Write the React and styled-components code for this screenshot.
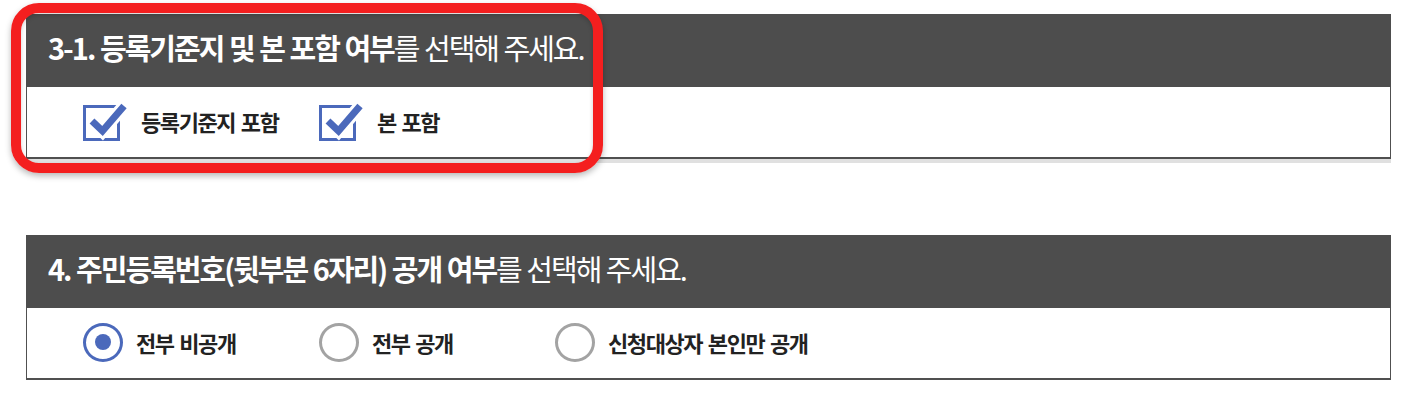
import React, { useState } from "react";
import styled, { createGlobalStyle } from "styled-components";

const GlobalStyle = createGlobalStyle`
  html, body {
    margin: 0;
    padding: 0;
    background: #ffffff;
  }
  body {
    font-family: "Noto Sans CJK KR", "Noto Sans", sans-serif;
  }
`;

const Page = styled.div`
  position: relative;
  display: flex;
  flex-direction: column;
  gap: 76px;
  padding: 14px 0 0 26px;
  width: 1365px;
`;

const Panel = styled.section`
  display: flex;
  flex-direction: column;
  width: 1365px;
  box-shadow: 1px 5px 0 -1px #e0e0e0;
`;

const Header = styled.h2`
  margin: 0;
  height: 73px;
  display: flex;
  align-items: center;
  padding: 0 0 8px 22px;
  box-sizing: border-box;
  background: #4d4d4d;
  color: #ffffff;
  font-size: 29px;
  font-weight: 400;
  letter-spacing: -2px;
  word-spacing: 1px;
  white-space: pre;

  strong {
    font-weight: 700;
  }
`;

const Body = styled.div`
  height: 72px;
  box-sizing: border-box;
  display: flex;
  align-items: center;
  padding: 0 0 2px 56px;
  border: 1.5px solid #505050;
  border-top: none;
  border-bottom-width: 2px;
  background: #ffffff;
`;

const Option = styled.label`
  display: flex;
  align-items: center;
  gap: ${(p) => (p.kind === "radio" ? "13px" : "14px")};
  min-width: 236px;
  cursor: pointer;
`;

const Label = styled.span`
  font-size: 22px;
  font-weight: 700;
  color: #222222;
  letter-spacing: -1.4px;
  word-spacing: 2px;
  white-space: pre;
`;

const RadioRing = styled.span`
  width: 40px;
  height: 39px;
  box-sizing: border-box;
  border-radius: 50%;
  border: 3px solid ${(p) => (p.checked ? "#4b69bb" : "#a3a3a3")};
  display: flex;
  align-items: center;
  justify-content: center;

  &::after {
    content: "";
    width: 16px;
    height: 16px;
    border-radius: 50%;
    background: #4b69bb;
    display: ${(p) => (p.checked ? "block" : "none")};
  }
`;

const Highlight = styled.div`
  position: absolute;
  left: 11px;
  top: 3px;
  width: 592px;
  height: 170px;
  box-sizing: border-box;
  border: 10px solid #f41f1f;
  border-radius: 28px;
  box-shadow: 0 3px 6px rgba(0, 0, 0, 0.28), inset 0 2px 4px rgba(0, 0, 0, 0.18);
  pointer-events: none;
`;

const CheckIcon = ({ checked }) => (
  <svg width="44" height="40" viewBox="0 0 44 40">
    <rect x="1.5" y="5.5" width="34" height="33" fill="none" stroke="#4b69bb" strokeWidth="3" />
    {checked && (
      <>
        <path d="M9 20 L19.5 30 L41 5" fill="none" stroke="#ffffff" strokeWidth="13" strokeLinejoin="miter" />
        <path d="M9 20 L19.5 30 L41 5" fill="none" stroke="#4b69bb" strokeWidth="7" strokeLinejoin="miter" />
      </>
    )}
  </svg>
);

const includeOptions = [
  { id: "base", text: "등록기준지 포함" },
  { id: "bon", text: "본 포함" },
];

const privacyOptions = [
  { id: "none", text: "전부 비공개" },
  { id: "all", text: "전부 공개" },
  { id: "self", text: "신청대상자 본인만 공개" },
];

export default function App() {
  const [checked, setChecked] = useState({ base: true, bon: true });
  const [privacy, setPrivacy] = useState("none");

  return (
    <>
      <GlobalStyle />
      <Page>
        <Panel>
          <Header>
            <strong>3-1. 등록기준지 및 본 포함 여부</strong>를 선택해 주세요.
          </Header>
          <Body>
            {includeOptions.map((o) => (
              <Option
                key={o.id}
                kind="check"
                onClick={() => setChecked({ ...checked, [o.id]: !checked[o.id] })}
              >
                <CheckIcon checked={checked[o.id]} />
                <Label>{o.text}</Label>
              </Option>
            ))}
          </Body>
        </Panel>

        <Panel>
          <Header>
            <strong>4. 주민등록번호(뒷부분 6자리) 공개 여부</strong>를 선택해 주세요.
          </Header>
          <Body>
            {privacyOptions.map((o) => (
              <Option key={o.id} kind="radio" onClick={() => setPrivacy(o.id)}>
                <RadioRing checked={privacy === o.id} />
                <Label>{o.text}</Label>
              </Option>
            ))}
          </Body>
        </Panel>

        <Highlight />
      </Page>
    </>
  );
}
